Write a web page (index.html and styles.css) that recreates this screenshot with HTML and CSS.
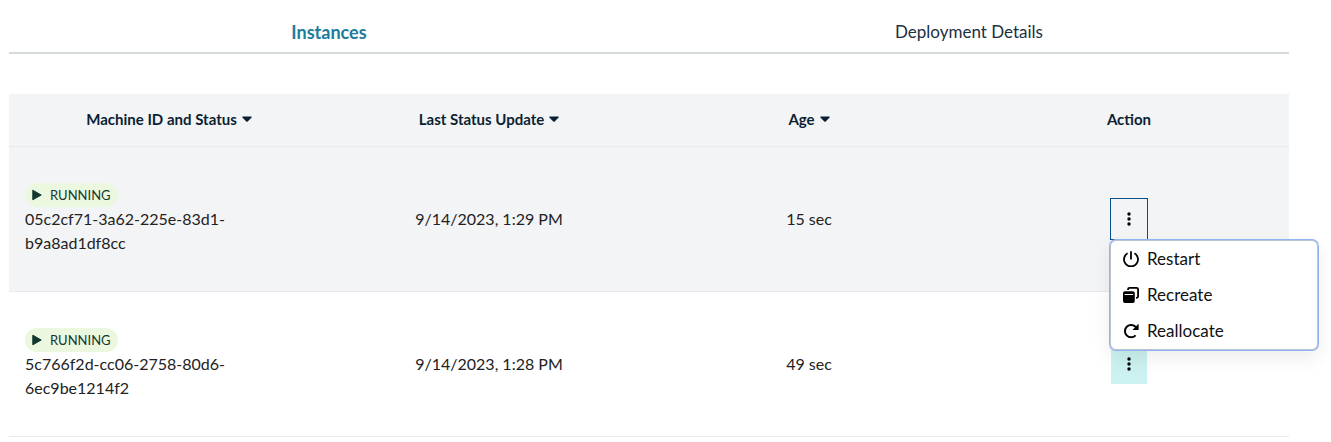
FILE: index.html
```html
<!DOCTYPE html>
<html lang="en">
<head>
<meta charset="utf-8">
<meta name="viewport" content="width=device-width, initial-scale=1">
<title>Instances</title>
<link rel="stylesheet" href="styles.css">
</head>
<body>
<svg class="sprite" aria-hidden="true">
  <symbol id="caret" viewBox="0 0 10 6"><path d="M.9.4h8.200c.7 0 1 .7.5 1.200L5.700 5.500q-.7.6-1.400 0L.4 1.600C-.1 1.100.2.4.9.4z"/></symbol>
  <symbol id="play" viewBox="0 0 10 12"><path d="M.8 1.200v9.600L9.200 6z" stroke="currentColor" stroke-linejoin="round"/></symbol>
  <symbol id="dots" viewBox="0 0 4 14"><circle cx="2" cy="2" r="1.700"/><circle cx="2" cy="7" r="1.700"/><circle cx="2" cy="12" r="1.700"/></symbol>
</svg>
<main class="page">
  <nav class="tabs">
    <a class="tab tab-active" href="#instances">Instances</a>
    <a class="tab" href="#details">Deployment Details</a>
  </nav>
  <table class="table" id="instances">
    <thead>
      <tr>
        <th scope="col"><button class="sort" type="button">Machine ID and Status<svg class="caret"><use href="#caret"/></svg></button></th>
        <th scope="col"><button class="sort" type="button">Last Status Update<svg class="caret"><use href="#caret"/></svg></button></th>
        <th scope="col"><button class="sort" type="button">Age<svg class="caret"><use href="#caret"/></svg></button></th>
        <th scope="col">Action</th>
      </tr>
    </thead>
    <tbody>
      <tr class="selected">
        <td class="machine"><span class="badge"><svg class="play"><use href="#play"/></svg>RUNNING</span><div>05c2cf71-3a62-225e-83d1-b9a8ad1df8cc</div></td>
        <td>9/14/2023, 1:29 PM</td>
        <td>15 sec</td>
        <td>
          <div class="actions">
            <button class="more more-open" type="button" aria-label="Actions" aria-expanded="true"><svg class="dots"><use href="#dots"/></svg></button>
            <div class="menu">
              <button class="item" type="button"><svg class="icon" viewBox="0 0 16 16"><path d="M4.600 2.300a7 7 0 1 0 6.800 0M8 .2v8.300" fill="none" stroke="currentColor" stroke-width="1.800"/></svg>Restart</button>
              <button class="item" type="button"><svg class="icon" viewBox="0 0 16 16"><path d="M5 3V2.400A1.600 1.600 0 0 1 6.600.9h6.900A1.600 1.600 0 0 1 15.100 2.400v6.800a1.600 1.600 0 0 1-1.600 1.600H13" fill="none" stroke="currentColor" stroke-width="1.800"/><path d="M2 4.200h7.800a2 2 0 0 1 2 2V14a2 2 0 0 1-2 2H2a2 2 0 0 1-2-2V6.200a2 2 0 0 1 2-2z"/><path d="M1.600 7.500h8.600" stroke="#fff" stroke-width="1"/></svg>Recreate</button>
              <button class="item" type="button"><svg class="icon" viewBox="0 0 16 16"><path d="M12.900 4.100A6.200 6.200 0 1 0 12.600 12.400" fill="none" stroke="currentColor" stroke-width="2"/><path d="M15.600.8v5.600q0 .6-.6.6H9.400z"/></svg>Reallocate</button>
            </div>
          </div>
        </td>
      </tr>
      <tr>
        <td class="machine"><span class="badge"><svg class="play"><use href="#play"/></svg>RUNNING</span><div>5c766f2d-cc06-2758-80d6-6ec9be1214f2</div></td>
        <td>9/14/2023, 1:28 PM</td>
        <td>49 sec</td>
        <td>
          <div class="actions">
            <button class="more" type="button" aria-label="Actions"><svg class="dots"><use href="#dots"/></svg></button>
          </div>
        </td>
      </tr>
    </tbody>
  </table>
</main>
</body>
</html>
```
FILE: styles.css
```css
* { box-sizing: border-box; }
body {
  margin: 0;
  background: #fff;
  color: #222;
  font-family: Lato, "Liberation Sans", sans-serif;
  font-size: 16px;
  line-height: 24px;
}
button { font: inherit; color: inherit; background: none; border: 0; padding: 0; cursor: pointer; }
svg { fill: currentColor; flex: none; }
.sprite { position: absolute; width: 0; height: 0; }
.page { padding: 12px 42px 0 9px; }
.tabs { display: flex; margin-bottom: 40px; }
.tab {
  flex: 1;
  padding: 8px 16px;
  border-bottom: 2px solid #d5dadd;
  color: #20303f;
  font-size: 17px;
  text-align: center;
  text-decoration: none;
}
.tab-active { color: #1c7c9c; font-size: 18px; font-weight: 700; }
.table { width: 100%; table-layout: fixed; border-collapse: separate; border-spacing: 0; }
th, td { border-bottom: 1px solid #e8eaed; text-align: center; }
th { padding: 13px 16px 15px; background: #f3f4f6; color: #0b1f33; font-size: 15px; font-weight: 700; }
td { padding: 36px 16px; }
.sort { display: inline-flex; align-items: center; gap: 5px; }
.caret { width: 10px; height: 6px; }
.machine { text-align: left; }
.selected td { background: #f3f4f6; }
.badge {
  display: flex;
  align-items: center;
  gap: 8px;
  width: fit-content;
  padding: 0 7px;
  border-radius: 12px;
  background: #ebf8df;
  color: #12372f;
  font-size: 13px;
}
.play { width: 10px; height: 12px; }
.actions { position: relative; width: 36px; margin: 0 auto; }
.more {
  display: flex;
  align-items: center;
  justify-content: center;
  width: 36px;
  height: 40px;
  background: #cbf2f0;
  color: #000;
}
.more-open { background: #f3f4f6; outline: 1px solid #04508c; }
.dots { width: 4px; height: 14px; }
.menu {
  position: absolute;
  z-index: 1;
  top: 41px;
  left: -1px;
  width: 208px;
  border: 1px solid #b9c3d3;
  border-radius: 6px;
  background: #fff;
  box-shadow: 0 0 0 1px #92b4f2, 0 8px 20px rgba(0, 0, 0, .08);
}
.item {
  display: flex;
  align-items: center;
  gap: 8px;
  width: 100%;
  padding: 6px 12px;
  color: #111;
  font-size: 17px;
}
.icon { width: 16px; height: 16px; color: #000; }
```
